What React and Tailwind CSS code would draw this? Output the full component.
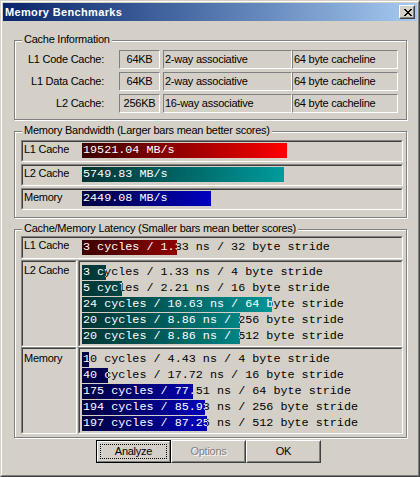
import React from "react";

const SANS = "font-['Liberation_Sans',Arial,sans-serif]";
const MONO = "font-['Liberation_Mono','Courier_New',monospace]";

const RED = "bg-linear-to-r from-[#3c0000] to-[#ff0000]";
const TEAL = "bg-linear-to-r from-[#003434] to-[#009c9c]";
const BLUE = "bg-linear-to-r from-[#000040] to-[#0000c0]";

function Sunken({ className = "", innerClass = "", children }) {
  return (
    <div className={`border border-t-[#808080] border-l-[#808080] border-b-white border-r-white ${className}`}>
      <div className={`h-full border border-t-[#404040] border-l-[#404040] border-b-[#d4d0c8] border-r-[#d4d0c8] ${innerClass}`}>
        {children}
      </div>
    </div>
  );
}

function Bar({ text, w, grad, gw }) {
  return (
    <div className={`relative h-[15px] ${MONO} text-[11.75px] leading-[15px] tracking-normal whitespace-pre`}>
      <div className="pl-[1px] text-black">{text}</div>
      <div className="absolute left-0 top-0 h-[15px] overflow-hidden" style={{ width: w }}>
        <div className={`h-[15px] pl-[1px] text-white ${grad}`} style={{ width: gw }}>
          {text}
        </div>
      </div>
    </div>
  );
}

function Group({ label, className = "", children }) {
  return (
    <div
      className={`relative w-[393px] ml-[11px] border border-[#808080] shadow-[inset_1px_1px_0_#fff,1px_1px_0_#fff] ${className}`}
    >
      <div className="absolute left-[7px] top-[-8px] px-[2px] bg-[#d4d0c8] leading-[13px] whitespace-nowrap">
        {label}
      </div>
      {children}
    </div>
  );
}

function InfoRow({ label, size, assoc, line }) {
  const box =
    "h-[19px] border border-t-[#808080] border-l-[#808080] border-b-white border-r-white leading-[17px] whitespace-nowrap overflow-hidden";
  return (
    <div className="flex items-center h-[19px]">
      <div className="w-[89px] text-right leading-[17px]">{label}</div>
      <div className={`${box} ml-[15px] w-[41px] text-center`}>{size}</div>
      <div className={`${box} ml-[3px] w-[129px] pl-[1px]`}>{assoc}</div>
      <div className={`${box} w-[106px] pl-[1px]`}>{line}</div>
    </div>
  );
}

function CloseX() {
  const rows = [
    [[0, 2], [6, 2]],
    [[1, 2], [5, 2]],
    [[2, 4]],
    [[3, 2]],
    [[2, 4]],
    [[1, 2], [5, 2]],
    [[0, 2], [6, 2]],
  ];
  return (
    <svg width="8" height="7" viewBox="0 0 8 7" shapeRendering="crispEdges">
      {rows.map((r, y) =>
        r.map(([x, w], i) => <rect key={`${y}-${i}`} x={x} y={y} width={w} height={1} fill="#000" />)
      )}
    </svg>
  );
}

function Button({ children, def, disabled }) {
  if (def) {
    return (
      <div className="w-[75px] h-[23px] border border-black">
        <div className="h-full border border-t-white border-l-white border-b-[#808080] border-r-[#808080] p-[2px]">
          <div className="h-full border border-dotted border-black flex items-center justify-center leading-[13px]">
            {children}
          </div>
        </div>
      </div>
    );
  }
  return (
    <div className="w-[75px] h-[23px] border border-t-white border-l-white border-b-[#404040] border-r-[#404040]">
      <div
        className={`h-full border border-t-[#d4d0c8] border-l-[#d4d0c8] border-b-[#808080] border-r-[#808080] flex items-center justify-center leading-[13px] ${
          disabled ? "text-[#808080] [text-shadow:1px_1px_0_#fff]" : ""
        }`}
      >
        {children}
      </div>
    </div>
  );
}

export default function App() {
  const l2 = [
    ["3 cycles / 1.33 ns / 4 byte stride", 24],
    ["5 cycles / 2.21 ns / 16 byte stride", 40],
    ["24 cycles / 10.63 ns / 64 byte stride", 190],
    ["20 cycles / 8.86 ns / 256 byte stride", 158],
    ["20 cycles / 8.86 ns / 512 byte stride", 158],
  ];
  const mem = [
    ["10 cycles / 4.43 ns / 4 byte stride", 7],
    ["40 cycles / 17.72 ns / 16 byte stride", 26],
    ["175 cycles / 77.51 ns / 64 byte stride", 111],
    ["194 cycles / 85.93 ns / 256 byte stride", 123],
    ["197 cycles / 87.25 ns / 512 byte stride", 125],
  ];
  return (
    <div
      className={`w-[420px] h-[477px] bg-[#d4d0c8] border border-t-[#d4d0c8] border-l-[#d4d0c8] border-b-[#404040] border-r-[#404040] ${SANS} text-[11px] text-black tracking-[-0.25px]`}
    >
      <div className="h-full border border-t-white border-l-white border-b-[#808080] border-r-[#808080]">
        <div className="h-full border border-[#d4d0c8] flex flex-col">
          {/* Title bar */}
          <div className="h-[18px] flex items-center bg-linear-to-r from-[#0a246a] to-[#a6caf0] pl-[2px] pr-[2px]">
            <div className="flex-1 text-white font-bold tracking-[0.35px] leading-[13px]">Memory Benchmarks</div>
            <div className="w-[16px] h-[14px] border border-t-white border-l-white border-b-[#404040] border-r-[#404040] bg-[#d4d0c8]">
              <div className="h-full border border-t-[#d4d0c8] border-l-[#d4d0c8] border-b-[#808080] border-r-[#808080] pl-[3px] pt-[2px]">
                <CloseX />
              </div>
            </div>
          </div>

          {/* Cache information */}
          <Group label="Cache Information" className="mt-[19px] pt-[9px] pb-[6px]">
            <div className="flex flex-col gap-[3px]">
              <InfoRow label="L1 Code Cache:" size="64KB" assoc="2-way associative" line="64 byte cacheline" />
              <InfoRow label="L1 Data Cache:" size="64KB" assoc="2-way associative" line="64 byte cacheline" />
              <InfoRow label="L2 Cache:" size="256KB" assoc="16-way associative" line="64 byte cacheline" />
            </div>
          </Group>

          {/* Memory bandwidth */}
          <Group
            label="Memory Bandwidth (Larger bars mean better scores)"
            className="mt-[11px] pt-[8px] pb-[7px] pl-[6px] pr-[3px]"
          >
            <div className="flex flex-col gap-[2px]">
              {[
                ["L1 Cache", "19521.04 MB/s", 205, RED, 205],
                ["L2 Cache", "5749.83 MB/s", 202, TEAL, 202],
                ["Memory", "2449.08 MB/s", 129, BLUE, 129],
              ].map(([lab, txt, w, g, gw]) => (
                <Sunken key={lab} className="h-[22px]">
                  <div className="flex pt-[1px]">
                    <div className="w-[59px] pl-[1px] leading-[13px]">{lab}</div>
                    <div className="flex-1">
                      <Bar text={txt} w={w} grad={g} gw={gw} />
                    </div>
                  </div>
                </Sunken>
              ))}
            </div>
          </Group>

          {/* Latency */}
          <Group
            label="Cache/Memory Latency (Smaller bars mean better scores)"
            className="mt-[11px] pt-[6px] pb-[3px] pl-[6px] pr-[3px]"
          >
            <Sunken className="h-[23px]">
              <div className="flex">
                <div className="w-[59px] pl-[1px] pt-[1px] leading-[13px]">L1 Cache</div>
                <div className="flex-1 pt-[2px]">
                  <Bar text="3 cycles / 1.33 ns / 32 byte stride" w={95} grad={RED} gw={205} />
                </div>
              </div>
            </Sunken>

            <div className="flex gap-[1px] mt-[1px]">
              <Sunken className="w-[56px] h-[87px]">
                <div className="pl-[1px] pt-[2px] leading-[13px]">L2 Cache</div>
              </Sunken>
              <Sunken className="w-[325px] h-[87px]" innerClass="pt-[3px] pl-[2px]">
                <div className="flex flex-col gap-[1px]">
                  {l2.map(([t, w]) => (
                    <Bar key={t} text={t} w={w} grad={TEAL} gw={202} />
                  ))}
                </div>
              </Sunken>
            </div>

            <div className="flex gap-[1px]">
              <Sunken className="w-[56px] h-[87px]">
                <div className="pl-[1px] pt-[3px] leading-[13px]">Memory</div>
              </Sunken>
              <Sunken className="w-[325px] h-[87px]" innerClass="pt-[3px] pl-[2px]">
                <div className="flex flex-col gap-[1px]">
                  {mem.map(([t, w]) => (
                    <Bar key={t} text={t} w={w} grad={BLUE} gw={129} />
                  ))}
                </div>
              </Sunken>
            </div>
          </Group>

          {/* Buttons */}
          <div className="flex mt-[2px] ml-[93px]">
            <Button def>Analyze</Button>
            <Button disabled>Options</Button>
            <Button>OK</Button>
          </div>
        </div>
      </div>
    </div>
  );
}
